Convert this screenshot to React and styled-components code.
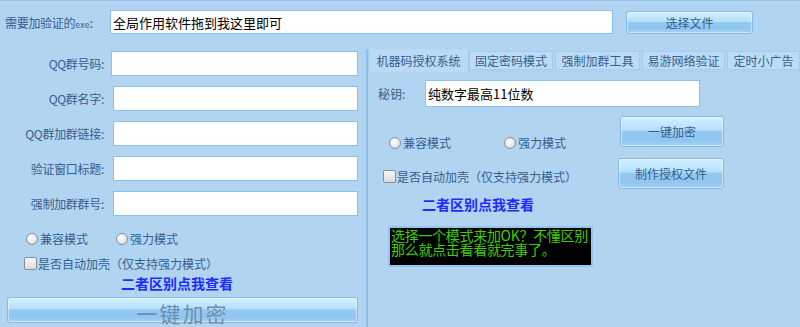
import React from 'react';
import styled, { createGlobalStyle } from 'styled-components';

const GlobalStyle = createGlobalStyle`
  html, body {
    margin: 0;
    padding: 0;
    background: #b1d4f1;
  }
  * { box-sizing: border-box; }
`;

const Page = styled.div`
  width: 800px;
  height: 327px;
  overflow: hidden;
  background: #b1d4f1;
  border-top: 1px solid #98c2e8;
  font-family: 'Noto Sans CJK SC', 'Noto Sans', sans-serif;
  font-size: 12px;
  color: #35608e;
`;

const TopRow = styled.div`
  display: flex;
  align-items: center;
  padding: 9px 0 0 5px;
`;

const TopLabel = styled.div`
  width: 105px;
  white-space: nowrap;
  letter-spacing: -0.3px;
  small {
    font-size: 8px;
    font-family: 'DejaVu Sans Mono', monospace;
    letter-spacing: 0;
  }
`;

const TextBox = styled.input`
  width: ${p => p.w}px;
  height: ${p => p.h || 25}px;
  border: 1px solid #8ec0ec;
  background: #fff;
  font-family: 'Noto Sans CJK SC', sans-serif;
  font-size: 13px;
  color: #000;
  padding: 0 2px;
  outline: none;
`;

const GlossButton = styled.button`
  width: ${p => p.w}px;
  height: ${p => p.h}px;
  border: 1px solid #86b9e4;
  border-radius: 3px;
  background: linear-gradient(#d2f0fe 0%, #b4e0fa 45%, #94caf1 50%, #8fc5ef 80%, #a6d6f6 100%);
  box-shadow: inset 0 0 0 1px rgba(255, 255, 255, 0.45);
  font-family: 'Noto Sans CJK SC', sans-serif;
  font-size: ${p => p.fs || 12}px;
  color: ${p => p.fg || '#35608e'};
  letter-spacing: ${p => p.ls || 0}px;
  padding: 0;
  cursor: pointer;
`;

const Main = styled.div`
  display: flex;
  margin-top: 17px;
`;

const LeftCol = styled.div`
  width: 366px;
  flex-shrink: 0;
`;

const Form = styled.div`
  display: flex;
  flex-direction: column;
  gap: 10px;
`;

const FormRow = styled.div`
  display: flex;
  align-items: center;
`;

const FieldLabel = styled.label`
  width: 111px;
  text-align: right;
  padding-right: 7px;
  white-space: nowrap;
  letter-spacing: -0.3px;
`;

const RadioRow = styled.div`
  display: flex;
  align-items: center;
  margin-top: ${p => p.mt || 0}px;
  padding-left: ${p => p.pl || 0}px;
`;

const RadioItem = styled.label`
  display: flex;
  align-items: center;
  width: ${p => p.w}px;
  gap: 2px;
`;

const RadioDot = styled.span`
  width: 12px;
  height: 12px;
  border-radius: 50%;
  border: 1px solid #8a8f96;
  background: radial-gradient(circle at 40% 35%, #ffffff 0%, #e9ecef 50%, #c7ccd2 100%);
`;

const CheckRow = styled.label`
  display: flex;
  align-items: center;
  gap: 1px;
  margin-top: ${p => p.mt || 0}px;
  padding-left: ${p => p.pl || 0}px;
  white-space: nowrap;
`;

const CheckBox = styled.span`
  width: 13px;
  height: 13px;
  border-radius: 2px;
  border: 1px solid #8a8f96;
  background: linear-gradient(#f7f8f9, #d8dcdf);
`;

const HelpLink = styled.div`
  font-weight: bold;
  font-size: 14px;
  color: #1f2cff;
  margin-top: ${p => p.mt || 0}px;
  padding-left: ${p => p.pl || 0}px;
  line-height: 16px;
  cursor: pointer;
`;

const TabPanel = styled.div`
  flex: 1;
  min-width: 0;
  overflow: hidden;
  margin-top: -2px;
  height: 280px;
  border-left: 2px solid #8ebfe9;
  display: flex;
  flex-direction: column;
`;

const TabBar = styled.div`
  display: flex;
  align-items: flex-end;
  height: 23px;
  flex-shrink: 0;
  border-bottom: 1px solid #a9d1f1;
`;

const Tab = styled.div`
  width: ${p => p.w}px;
  flex-shrink: 0;
  height: ${p => (p.active ? 24 : 19)}px;
  margin-bottom: ${p => (p.active ? -1 : 1)}px;
  margin-right: ${p => p.mr || 0}px;
  background: ${p => (p.active ? '#b8daf4' : '#bcdcf5')};
  border: 1px solid #a3cdef;
  border-bottom: ${p => (p.active ? 'none' : '1px solid #a3cdef')};
  display: flex;
  align-items: center;
  justify-content: center;
  white-space: nowrap;
  font-size: 12px;
`;

const TabBody = styled.div`
  padding: 8px 0 0 10px;
`;

const KeyRow = styled.div`
  display: flex;
  align-items: center;
`;

const KeyLabel = styled.label`
  width: 47px;
`;

const BodyColumns = styled.div`
  display: flex;
`;

const SubLeft = styled.div`
  width: 240px;
`;

const ButtonCol = styled.div`
  display: flex;
  flex-direction: column;
  align-items: flex-end;
  gap: 11px;
  margin-top: 9px;
  width: 106px;
`;

const Console = styled.div`
  width: 205px;
  height: 41px;
  margin: 14px 0 0 10px;
  border: 2px solid #95c4ef;
  background: #000;
  color: #3fd000;
  font-family: 'Noto Sans CJK SC', monospace;
  font-size: 14px;
  line-height: 14px;
  padding: 0 0 0 1px;
  letter-spacing: -0.3px;
  white-space: nowrap;
  overflow: hidden;
`;

const ConsoleLine = styled.div`
  height: 14px;
`;

const App = () => {
  return (
    <Page>
      <GlobalStyle />
      <TopRow>
        <TopLabel>需要加验证的<small>exe</small>:</TopLabel>
        <TextBox w={503} h={24} defaultValue="全局作用软件拖到我这里即可" />
        <GlossButton w={127} h={23} style={{ marginLeft: 13 }}>选择文件</GlossButton>
      </TopRow>
      <Main>
        <LeftCol>
          <Form>
            <FormRow>
              <FieldLabel>QQ群号码:</FieldLabel>
              <TextBox w={247} />
            </FormRow>
            <FormRow>
              <FieldLabel>QQ群名字:</FieldLabel>
              <TextBox w={245} style={{ marginLeft: 2 }} />
            </FormRow>
            <FormRow>
              <FieldLabel>QQ群加群链接:</FieldLabel>
              <TextBox w={245} style={{ marginLeft: 2 }} />
            </FormRow>
            <FormRow>
              <FieldLabel>验证窗口标题:</FieldLabel>
              <TextBox w={245} style={{ marginLeft: 2 }} />
            </FormRow>
            <FormRow>
              <FieldLabel>强制加群群号:</FieldLabel>
              <TextBox w={245} style={{ marginLeft: 2 }} />
            </FormRow>
          </Form>
          <RadioRow mt={14} pl={26}>
            <RadioItem w={90}><RadioDot />兼容模式</RadioItem>
            <RadioItem w={90}><RadioDot />强力模式</RadioItem>
          </RadioRow>
          <CheckRow mt={8} pl={24}>
            <CheckBox />是否自动加壳（仅支持强力模式）
          </CheckRow>
          <HelpLink mt={3} pl={121}>二者区别点我查看</HelpLink>
          <GlossButton w={351} h={26} fs={21} fg="#6d8fae" ls={2} style={{ marginTop: 6, marginLeft: 7 }}>
            一键加密
          </GlossButton>
        </LeftCol>
        <TabPanel>
          <TabBar>
            <Tab active w={101}>机器码授权系统</Tab>
            <Tab w={84} mr={2}>固定密码模式</Tab>
            <Tab w={85} mr={2}>强制加群工具</Tab>
            <Tab w={83} mr={2}>易游网络验证</Tab>
            <Tab w={73}>定时小广告</Tab>
          </TabBar>
          <TabBody>
            <KeyRow>
              <KeyLabel>秘钥:</KeyLabel>
              <TextBox w={275} h={27} defaultValue="纯数字最高11位数" />
            </KeyRow>
            <BodyColumns>
              <SubLeft>
                <RadioRow mt={27} pl={11}>
                  <RadioItem w={115}><RadioDot />兼容模式</RadioItem>
                  <RadioItem w={100}><RadioDot />强力模式</RadioItem>
                </RadioRow>
                <CheckRow mt={17} pl={5}>
                  <CheckBox />是否自动加壳（仅支持强力模式）
                </CheckRow>
                <HelpLink mt={11} pl={44}>二者区别点我查看</HelpLink>
                <Console>
                  <ConsoleLine>选择一个模式来加OK？不懂区别</ConsoleLine>
                  <ConsoleLine>那么就点击看看就完事了。</ConsoleLine>
                </Console>
              </SubLeft>
              <ButtonCol>
                <GlossButton w={104} h={31}>一键加密</GlossButton>
                <GlossButton w={106} h={31}>制作授权文件</GlossButton>
              </ButtonCol>
            </BodyColumns>
          </TabBody>
        </TabPanel>
      </Main>
    </Page>
  );
};

export default App;
